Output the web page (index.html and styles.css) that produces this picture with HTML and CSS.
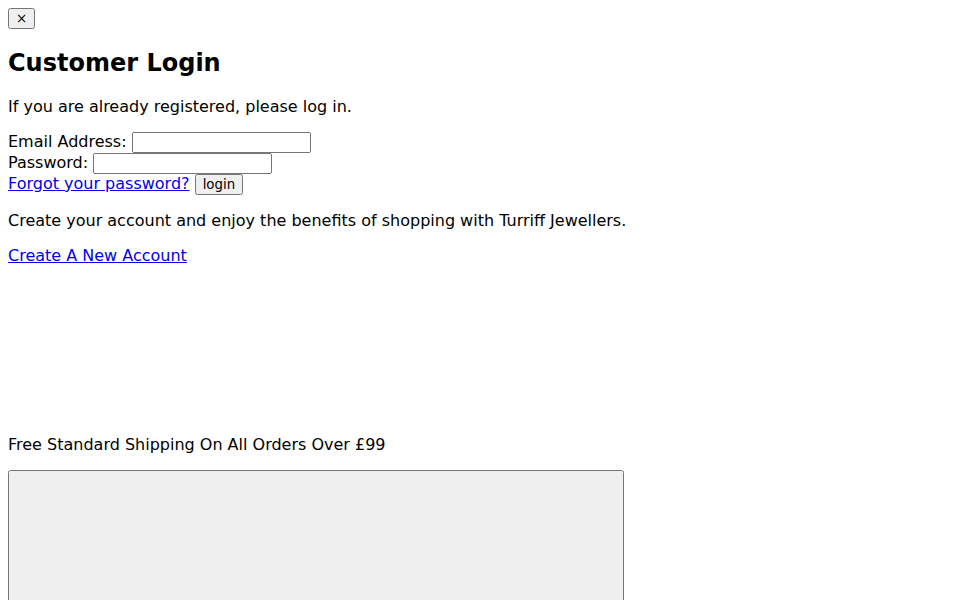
FILE: index.html
```html
<!DOCTYPE html>
<html>
<head>
<meta charset="utf-8">
<title>Customer Login</title>
<link rel="stylesheet" href="styles.css">
</head>
<body>
<button class="close" type="button">×</button>
<h2>Customer Login</h2>
<p>If you are already registered, please log in.</p>
<form class="login-form">
  <label>Email Address: <input type="text"></label><br>
  <label>Password: <input type="password"></label><br>
  <a href="#">Forgot your password?</a> <button type="button">login</button>
</form>
<p>Create your account and enjoy the benefits of shopping with Turriff Jewellers.</p>
<p><a href="#">Create A New Account</a></p>
<div class="spacer"></div>
<p>Free Standard Shipping On All Orders Over £99</p>
<button class="panel" type="button"></button>
</body>
</html>
```

FILE: styles.css
```css
body {
  font-family: "DejaVu Sans", sans-serif;
  margin: 8px;
}
input,
button {
  font-family: "DejaVu Sans", sans-serif;
  font-size: 13.333px;
}
.login-form {
  margin: 0;
}
.spacer {
  height: 138px;
}
.panel {
  display: block;
  width: 616px;
  height: 200px;
}
```
